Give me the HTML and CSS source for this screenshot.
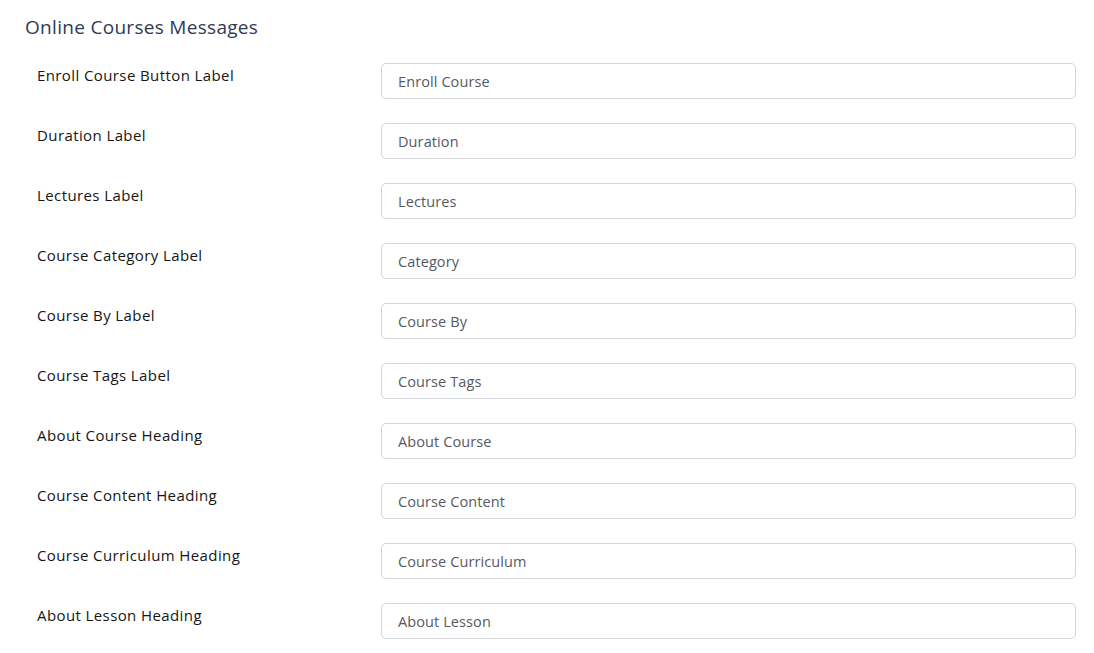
FILE: index.html
```html
<!DOCTYPE html>
<html>
	<head>
		<meta charset="utf-8">
		<title>Online Courses Messages</title>
		<link rel="stylesheet" href="styles.css">
	</head>
	<body>
		<div class="panel">
			<h3 class="panel-title">Online Courses Messages</h3>
			<div class="field">
				<label class="field-label">Enroll Course Button Label</label>
				<input class="field-input" type="text" value="Enroll Course">
			</div>
			<div class="field">
				<label class="field-label">Duration Label</label>
				<input class="field-input" type="text" value="Duration">
			</div>
			<div class="field">
				<label class="field-label">Lectures Label</label>
				<input class="field-input" type="text" value="Lectures">
			</div>
			<div class="field">
				<label class="field-label">Course Category Label</label>
				<input class="field-input" type="text" value="Category">
			</div>
			<div class="field">
				<label class="field-label">Course By Label</label>
				<input class="field-input" type="text" value="Course By">
			</div>
			<div class="field">
				<label class="field-label">Course Tags Label</label>
				<input class="field-input" type="text" value="Course Tags">
			</div>
			<div class="field">
				<label class="field-label">About Course Heading</label>
				<input class="field-input" type="text" value="About Course">
			</div>
			<div class="field">
				<label class="field-label">Course Content Heading</label>
				<input class="field-input" type="text" value="Course Content">
			</div>
			<div class="field">
				<label class="field-label">Course Curriculum Heading</label>
				<input class="field-input" type="text" value="Course Curriculum">
			</div>
			<div class="field">
				<label class="field-label">About Lesson Heading</label>
				<input class="field-input" type="text" value="About Lesson">
			</div>
		</div>
	</body>
</html>
```

FILE: styles.css
```css
* {
	margin: 0;
	padding: 0;
	box-sizing: border-box;
}

body {
	background: #fff;
	font-family: "Open Sans", "Liberation Sans", sans-serif;
}

.panel {
	padding: 15px 18px 0 25px;
}

.panel-title {
	font-size: 19px;
	line-height: 24px;
	font-weight: 500;
	letter-spacing: 0.3px;
	color: #2f3a55;
	margin-bottom: 24px;
}

.field {
	display: flex;
	align-items: flex-start;
	padding-left: 12px;
	margin-bottom: 24px;
}

.field-label {
	width: 344px;
	flex-shrink: 0;
	font-size: 15px;
	line-height: 24px;
	font-weight: 500;
	letter-spacing: 0.4px;
	color: #161616;
}

.field-input {
	flex: 1;
	height: 36px;
	border: 1px solid #d4d6da;
	border-radius: 5px;
	padding: 0 16px;
	font-family: inherit;
	font-size: 14.5px;
	letter-spacing: 0.1px;
	color: #555a62;
	outline: none;
}
```
